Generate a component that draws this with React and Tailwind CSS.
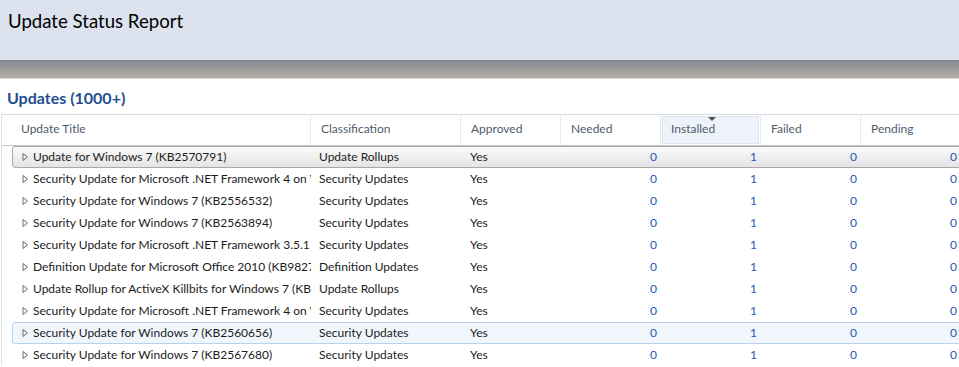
import { useState } from 'react'

const rows = [
  { title: 'Update for Windows 7 (KB2570791)', cls: 'Update Rollups' },
  { title: 'Security Update for Microsoft .NET Framework 4 on Windows XP, Windows Server 2003 (KB2518870)', cls: 'Security Updates' },
  { title: 'Security Update for Windows 7 (KB2556532)', cls: 'Security Updates' },
  { title: 'Security Update for Windows 7 (KB2563894)', cls: 'Security Updates' },
  { title: 'Security Update for Microsoft .NET Framework 3.5.1 on Windows 7 (KB2518869)', cls: 'Security Updates' },
  { title: 'Definition Update for Microsoft Office 2010 (KB982726)', cls: 'Definition Updates' },
  { title: 'Update Rollup for ActiveX Killbits for Windows 7 (KB2562937)', cls: 'Update Rollups' },
  { title: 'Security Update for Microsoft .NET Framework 4 on Windows 7 (KB2446708)', cls: 'Security Updates' },
  { title: 'Security Update for Windows 7 (KB2560656)', cls: 'Security Updates' },
  { title: 'Security Update for Windows 7 (KB2567680)', cls: 'Security Updates' },
]

const headers = ['Classification', 'Approved', 'Needed', 'Installed', 'Failed', 'Pending']

function Expander() {
  return (
    <svg width="7" height="10" viewBox="0 0 7 10" className="shrink-0">
      <path d="M1 1.5 L5.5 5 L1 8.5 Z" fill="none" stroke="#6b6b6b" strokeWidth="1" />
    </svg>
  )
}

export default function App() {
  const [selected] = useState(0)
  const hovered = 8

  return (
    <div className="w-[959px] h-[367px] overflow-hidden bg-white text-[12px] text-[#1c1c1c]" style={{ fontFamily: 'Lato, "Open Sans", sans-serif' }}>
      {/* Banner */}
      <div className="h-[60px] bg-[#dce2ee] pl-2 pt-[10px]">
        <h1 className="text-[18.6px] leading-[22px] text-black">Update Status Report</h1>
      </div>
      <div className="h-[19px] bg-gradient-to-b from-[#858793] to-[#b4afa6] border-b border-[#d4d4d4]" />

      {/* Section */}
      <div className="pt-[9px] pl-[7px] h-[35px]">
        <h2 className="text-[16px] leading-[20px] font-bold text-[#1f4f8f]">Updates (1000+)</h2>
      </div>

      <div className="ml-[1px] border-l border-[#dfe3e8]">
        {/* Header */}
        <div className="grid grid-cols-[309px_150px_100px_100px_100px_100px_100px] h-[32px] border-t border-[#d9dde2] border-b border-b-[#c4c4c4] text-[#4e5b6c]">
          <div className="pl-[19px] pb-[3px] flex items-center border-r border-[#e4e9f0]">Update Title</div>
          {headers.map((h) =>
            h === 'Installed' ? (
              <div key={h} className="flex items-center px-[1px] border-r border-[#e4e9f0]">
                <div className="relative h-[28px] flex-1 pl-[8px] pb-[3px] flex items-center bg-[#eef3fa] border border-[#dde6f1]">
                  <span className="absolute left-[45px] top-0 w-0 h-0 border-l-[4px] border-r-[4px] border-t-[4px] border-l-transparent border-r-transparent border-t-[#555]" />
                  {h}
                </div>
              </div>
            ) : (
              <div key={h} className="flex items-center pl-[10px] pb-[3px] border-r border-[#e4e9f0]">
                {h}
              </div>
            )
          )}
        </div>

        {/* Rows */}
        <div>
          {rows.map((r, i) => {
            const isSel = i === selected
            const isHov = i === hovered
            return (
              <div
                key={i}
                className={`ml-[10px] w-[970px] h-[22px] rounded-[3px] border grid grid-cols-[298px_150px_100px_100px_100px_100px_100px] items-center ${
                  isSel
                    ? 'border-[#a9a9a9] bg-gradient-to-b from-[#fbfbfb] to-[#e4e4e4]'
                    : isHov
                    ? 'border-[#b8d1ec] bg-[#f1f6fc]'
                    : 'border-transparent'
                }`}
              >
                <div className="flex items-center pl-[9px] gap-[4px] overflow-hidden whitespace-nowrap">
                  <Expander />
                  <span>{r.title}</span>
                </div>
                <div className="pl-[8px] whitespace-nowrap overflow-hidden">{r.cls}</div>
                <div className="pl-[9px]">Yes</div>
                <div className="text-right pr-[4px] text-[#1f58b3]">0</div>
                <div className="text-right pr-[4px] text-[#1f58b3]">1</div>
                <div className="text-right pr-[4px] text-[#1f58b3]">0</div>
                <div className="text-right pr-[4px] text-[#1f58b3]">0</div>
              </div>
            )
          })}
        </div>
      </div>
    </div>
  )
}
